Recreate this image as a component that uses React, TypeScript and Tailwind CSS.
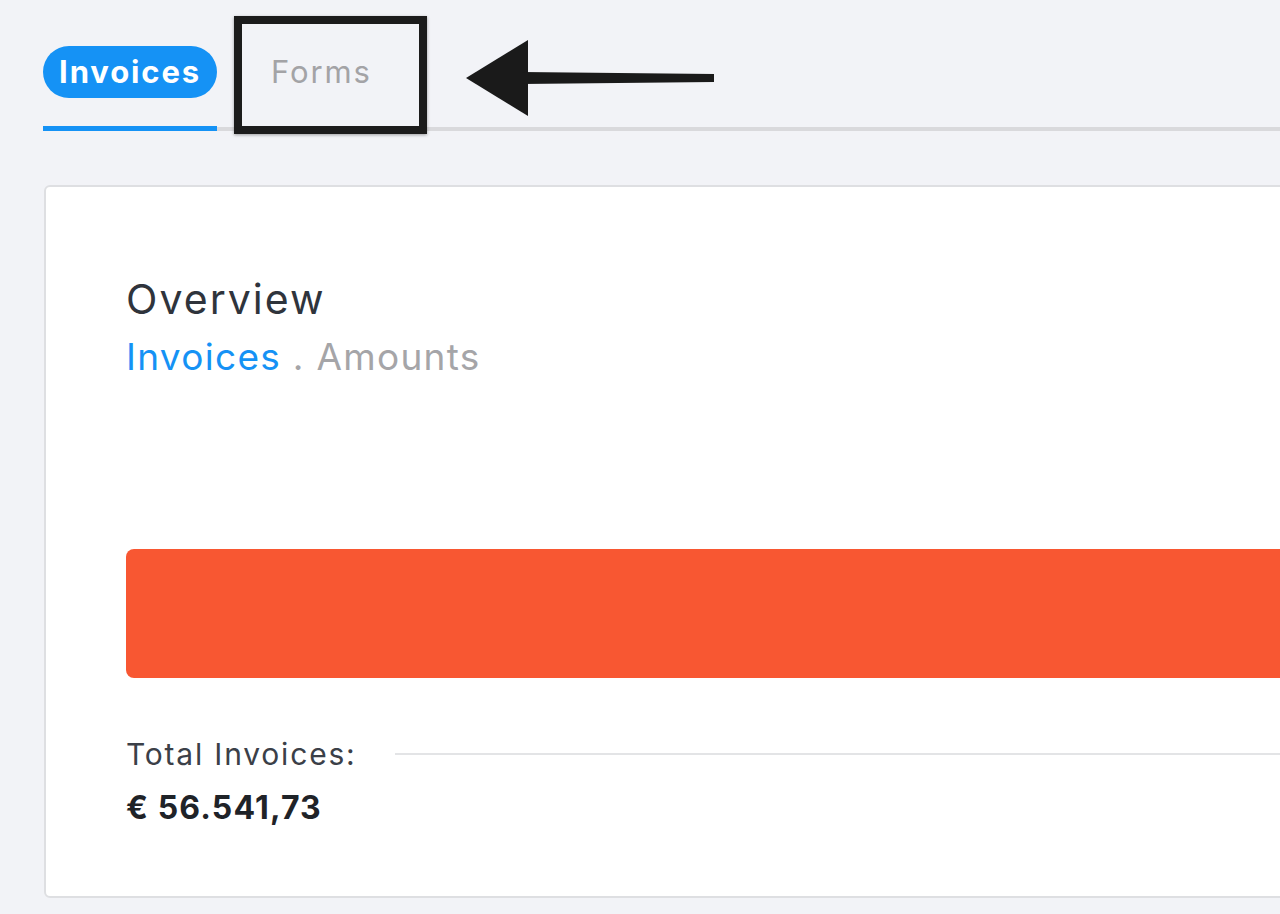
import React from 'react';

const FONT = { fontFamily: 'Inter, "Noto Sans", Arial, sans-serif' };

function AnnotationArrow() {
  // hand-drawn style arrow pointing left at the Forms tab
  return (
    <svg className="absolute left-[462px] top-[36px]" width="256" height="84" viewBox="0 0 256 84">
      <path d="M4 42 L66 4 L66 80 Z" fill="#1a1a1a" />
      <path d="M60 36 L252 38 L252 46 L60 48 Z" fill="#1a1a1a" />
    </svg>
  );
}

export default function App() {
  return (
    <div className="relative min-h-screen w-full overflow-hidden bg-[#f2f3f7]" style={FONT}>
      {/* Tabs */}
      <div className="pl-[43px] pt-[46px]">
        <div className="flex items-end border-b-4 border-[#d9d9dc]">
          <div className="-mb-1 border-b-[5px] border-[#1592f5] pb-[28px]">
            <div className="flex h-[52px] w-[174px] items-center justify-center rounded-full bg-[#1592f5] text-[31px] font-bold tracking-[0.06em] text-white">
              Invoices
            </div>
          </div>
          <div className="ml-[54px] flex h-[52px] items-center self-start text-[31px] tracking-[0.06em] text-[#a3a3a6]">
            Forms
          </div>
        </div>
      </div>

      {/* Annotation overlay */}
      <div className="absolute left-[234px] top-[16px] h-[118px] w-[193px] border-[8px] border-[#1c1c1c] shadow-[0_1px_3px_rgba(0,0,0,0.35)]" />
      <AnnotationArrow />

      {/* Card */}
      <div className="ml-[44px] mt-[54px] h-[713px] w-[1300px] rounded-md border-2 border-[#dedfe2] bg-white pl-[80px] pt-[88px]">
        <div className="text-[41px] leading-[48px] tracking-[0.05em] text-[#2f343c]">Overview</div>
        <div className="mt-[12px] text-[37px] leading-[44px] tracking-[0.035em]">
          <span className="text-[#1592f5]">Invoices</span>
          <span className="text-[#a5a5a8]"> . Amounts</span>
        </div>

        <div className="mt-[170px] h-[129px] w-full rounded-l-lg bg-[#f85732]" />

        <div className="mt-[56px] flex items-center">
          <span className="text-[30px] leading-[40px] tracking-[0.06em] text-[#3b4048]">Total Invoices:</span>
          <div className="ml-[38px] h-[2px] flex-1 bg-[#e3e4e6]" />
        </div>
        <div className="mt-[14px] text-[32px] font-bold leading-[40px] tracking-[0.035em] text-[#1f2328]">€ 56.541,73</div>
      </div>
    </div>
  );
}
